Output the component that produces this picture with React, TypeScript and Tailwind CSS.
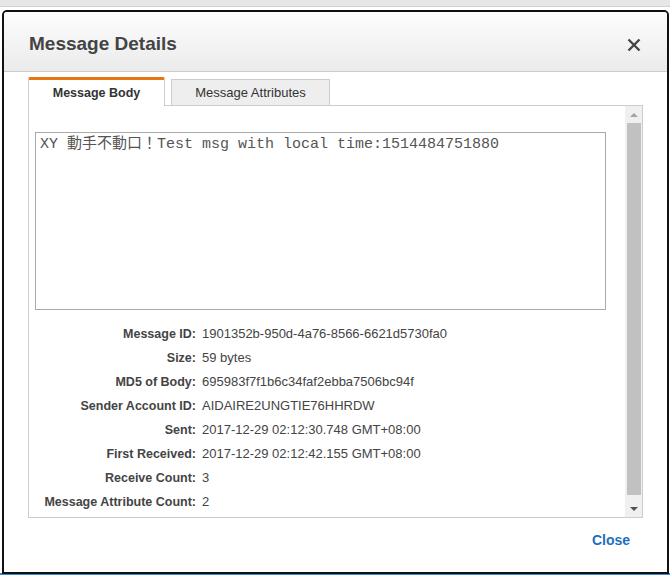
const details: [string, string][] = [
  ['Message ID:', '1901352b-950d-4a76-8566-6621d5730fa0'],
  ['Size:', '59 bytes'],
  ['MD5 of Body:', '695983f7f1b6c34faf2ebba7506bc94f'],
  ['Sender Account ID:', 'AIDAIRE2UNGTIE76HHRDW'],
  ['Sent:', '2017-12-29 02:12:30.748 GMT+08:00'],
  ['First Received:', '2017-12-29 02:12:42.155 GMT+08:00'],
  ['Receive Count:', '3'],
  ['Message Attribute Count:', '2'],
]

function Scrollbar() {
  return (
    <div className="flex w-[17px] shrink-0 flex-col bg-[#f0f0f0]">
      <div className="flex h-[17px] items-center justify-center">
        <div className="h-0 w-0 border-x-[4px] border-b-[4px] border-x-transparent border-b-[#a3a3a3]" />
      </div>
      <div className="ml-[2px] mr-[1px] h-[372px] bg-[#c1c1c1]" />
      <div className="flex-1" />
      <div className="flex h-[17px] items-center justify-center">
        <div className="h-0 w-0 border-x-[4px] border-t-[4px] border-x-transparent border-t-[#505050]" />
      </div>
    </div>
  )
}

export default function App() {
  return (
    <div className="relative h-[575px] w-[670px] overflow-hidden bg-white font-['Liberation_Sans',Arial,sans-serif] text-[#444]">
      <div className="h-[7px] border-b border-[#d2d2d2] bg-[#e6e6e6]" />
      <div className="absolute bottom-0 left-0 h-[2px] w-full bg-[#3b8ad8]" />

      {/* dialog */}
      <div className="absolute left-[2px] top-[10px] flex h-[564px] w-[667px] flex-col rounded-t-[5px] border-2 border-[#111] bg-white">
        <div className="flex h-[60px] shrink-0 items-center justify-between rounded-t-[3px] border-b border-[#cccccc] bg-gradient-to-b from-[#fdfdfd] to-[#ebebeb] pl-[25px] pr-[26px] pt-[5px]">
          <h3 className="text-[19px] font-bold text-[#444]">Message Details</h3>
          <svg width="14" height="14" viewBox="0 0 14 14" className="mt-[1px]">
            <path d="M1.5 1.5 L12.5 12.5 M12.5 1.5 L1.5 12.5" stroke="#444" strokeWidth="2.4" />
          </svg>
        </div>

        <div className="ml-[24px] mt-[5px] flex items-end">
          <div className="relative z-10 -mb-px flex h-[29px] w-[137px] items-center justify-center rounded-t-[2px] border-x border-t-[3px] border-x-[#cccccc] border-t-[#e47911] bg-white text-[12.5px] font-bold text-[#333]">
            Message Body
          </div>
          <div className="ml-[6px] flex h-[26px] w-[159px] items-center justify-center border-x border-t border-[#cccccc] bg-[#eeeeee] text-[13px] text-[#333]">
            Message Attributes
          </div>
        </div>

        <div className="mx-[24px] flex h-[413px] shrink-0 border border-[#cccccc]">
          <div className="flex-1 pl-[6px] pr-[19px] pt-[26px]">
            <textarea
              readOnly
              value="XY 動手不動口！Test msg with local time:1514484751880"
              className="block h-[178px] w-full resize-none overflow-hidden border border-[#aaaaaa] px-[4px] pt-[3px] font-['Liberation_Mono','Noto_Sans_CJK_TC',monospace] text-[15px] leading-[17px] text-[#555] outline-none"
            />
            <div className="mt-[12px] grid grid-cols-[161px_1fr] gap-x-[6px] text-[13px] leading-[24px]">
              {details.map(([label, value]) => (
                <div key={label} className="contents">
                  <div className="text-right text-[12.5px] font-bold text-[#444]">{label}</div>
                  <div className="text-[#444]">{value}</div>
                </div>
              ))}
            </div>
          </div>
          <Scrollbar />
        </div>

        <div className="flex flex-1 justify-end pr-[37px] pt-[14px]">
          <a className="cursor-pointer text-[14px] font-bold leading-[16px] text-[#1e6ebe]">Close</a>
        </div>
      </div>
    </div>
  )
}
